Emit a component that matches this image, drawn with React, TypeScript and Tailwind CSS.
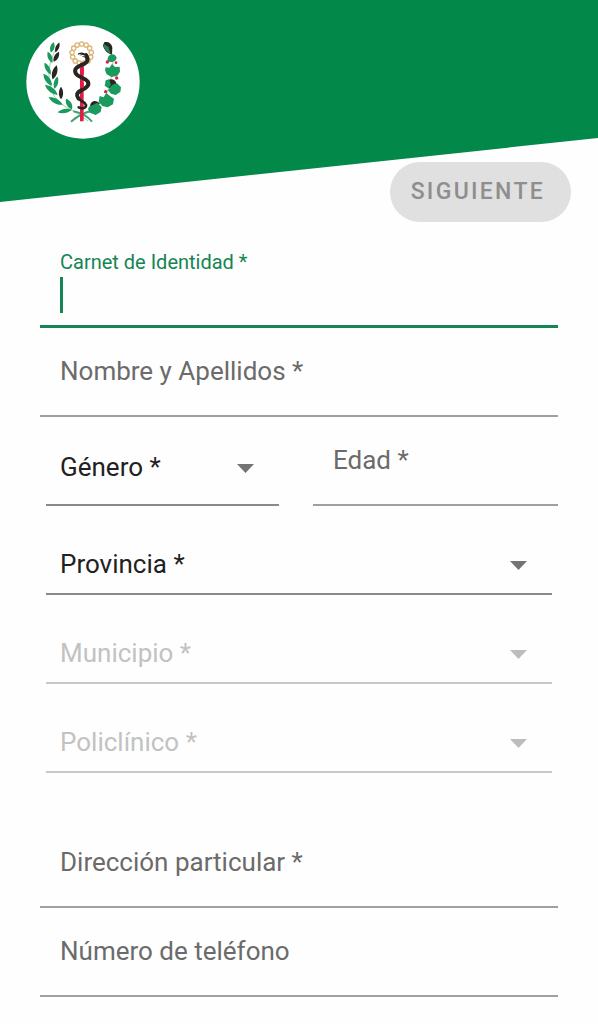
import { useState } from "react";

function Leaf({ x, y, r, l = 15, w = 6, dark = false }: { x: number; y: number; r: number; l?: number; w?: number; dark?: boolean }) {
  return (
    <path
      d={`M0 ${-l}C${w * 1.2} ${-l / 2} ${w * 1.6} ${l / 3} 0 ${l}C${-w * 1.6} ${l / 3} ${-w * 1.2} ${-l / 2} 0 ${-l}Z`}
      transform={`translate(${x} ${y}) rotate(${r})`}
      fill={dark ? "#2b2422" : "#1a9a5c"}
    />
  );
}

function Emblem() {
  const beads = Array.from({ length: 13 }, (_, i) => {
    const a = (i / 13) * Math.PI * 2 + Math.PI / 2 + 0.24;
    return [185 + 29 * Math.cos(a), 101 + 29 * Math.sin(a)];
  });
  return (
    <svg viewBox="18 15 342 342" className="size-[114px]" role="img" aria-label="Salud Pública">
      <circle cx="189" cy="186" r="170" fill="#fff" />
      <g fill="none" stroke="#dcb677" strokeWidth="4">
        {beads.map(([x, y], i) => (
          <circle key={i} cx={x} cy={y} r="6.5" />
        ))}
      </g>
      <path d="M107 90C82 130 80 190 104 230C124 262 162 268 204 303" fill="none" stroke="#65b78e" strokeWidth="2" />
      <Leaf x={97} y={82} r={15} l={16} />
      <Leaf x={112} y={82} r={22} l={16} w={5} dark />
      <Leaf x={90} y={112} r={-22} l={18} />
      <Leaf x={109} y={110} r={28} l={17} w={6} dark />
      <Leaf x={83} y={146} r={-28} l={20} />
      <Leaf x={104} y={157} r={16} l={22} w={7} dark />
      <Leaf x={83} y={179} r={-35} l={22} w={7} />
      <Leaf x={108} y={188} r={14} l={19} />
      <Leaf x={94} y={210} r={-52} l={24} w={7} />
      <Leaf x={123} y={219} r={0} l={19} w={6} dark />
      <Leaf x={107} y={243} r={-62} l={24} w={7} />
      <Leaf x={147} y={252} r={-30} l={18} w={7} />
      <Leaf x={134} y={273} r={-100} l={22} />
      <path d="M153 305C175 286 195 276 216 273" fill="none" stroke="#3fa271" strokeWidth="6" />
      <path d="M160 274C184 278 202 289 216 305" fill="none" stroke="#3fa271" strokeWidth="6" />
      <path d="M180 128H191V304H180Z" fill="#e21c46" />
      <g fill="none" stroke="#2b2422" strokeLinecap="round">
        <path d="M198 105C208 121 201 128 188 134C171 141 163 145 166 157C169 171 194 172 203 184C211 197 196 205 184 211C170 217 168 226 175 235" strokeWidth="12" />
        <path d="M175 235C181 244 195 245 198 255C199 264 188 268 176 262" strokeWidth="8" />
      </g>
      <path d="M173 103C177 95 194 94 203 109L204 118L192 112C187 108 180 107 173 103Z" fill="#2b2422" />
      <path d="M177 104L194 108" stroke="#fff" strokeWidth="3" />
      <path d="M186 142V163M186 188V203" stroke="#e21c46" strokeWidth="11" />
      <path d="M271 90C281 112 279 132 276 148C272 186 270 219 227 263" fill="none" stroke="#65b78e" strokeWidth="2" />
      <path d="M253 67C263 64 275 70 277 83L276 104C264 102 252 92 249 76Z" fill="#2b2422" />
      <path d="M251 72L265 80L272 101C258 95 250 84 251 72Z" fill="#238858" />
      <path d="M264 111C272 98 288 102 290 114C288 126 271 130 262 122Z" fill="#1a9a5c" />
      <path d="M257 142L268 143L276 132L285 141L299 140L300 155L292 167L275 171L260 163L255 151Z" fill="#1a9a5c" />
      <path d="M260 184C268 174 286 176 289 190C289 205 269 210 262 199L257 193Z" fill="#2b2422" />
      <path d="M257 181L268 178L273 196L264 204L254 197Z" fill="#1a9a5c" />
      <path d="M269 203L279 193L291 190L303 202L301 216L287 225L273 221L264 211Z" fill="#1a9a5c" />
      <path d="M239 228L251 232L259 219L270 228L282 236L279 253L263 262L247 258L236 245Z" fill="#1a9a5c" />
      <path d="M210 258C212 241 230 239 239 251L229 263Z" fill="#2b2422" />
      <path d="M207 260L220 254L232 248L245 261L242 276L227 285L210 278L204 268Z" fill="#1a9a5c" />
      <g fill="#e21c46">
        <circle cx="262" cy="126" r="5" />
        <circle cx="288" cy="128" r="4" />
        <circle cx="290" cy="174" r="5" />
        <circle cx="257" cy="215" r="5" />
      </g>
    </svg>
  );
}

function TextField({ id, label, type = "text" }: { id: string; label: string; type?: string }) {
  const [value, setValue] = useState("");
  return (
    <div className="grid h-[89px] border-b-2 border-[#a0a0a0]">
      <label
        htmlFor={id}
        className={
          value
            ? "pointer-events-none col-start-1 row-start-1 pt-2 pl-5 text-[20px] leading-[30px]"
            : "pointer-events-none col-start-1 row-start-1 pt-7 pl-5 text-[26px] leading-[30px]"
        }
      >
        {label}
      </label>
      <input
        id={id}
        type={type}
        value={value}
        onChange={(e) => setValue(e.target.value)}
        className="col-start-1 row-start-1 w-full min-w-0 bg-transparent px-5 pt-9 text-[26px] text-[#212121] outline-none"
      />
    </div>
  );
}

function ActiveField({ id, label }: { id: string; label: string }) {
  const [value, setValue] = useState("");
  return (
    <div className="flex h-[89px] flex-col border-b-[3px] border-[#158553] px-5 pt-2">
      <label htmlFor={id} className="text-[20px] leading-[30px] text-[#158553]">
        {label}
      </label>
      <div className="flex h-9 items-center">
        {value === "" && <span className="h-9 w-[3px] shrink-0 bg-[#158553]" />}
        <input
          id={id}
          inputMode="numeric"
          value={value}
          onChange={(e) => setValue(e.target.value)}
          className="h-9 w-full min-w-0 bg-transparent text-[26px] text-[#212121] caret-transparent outline-none"
        />
      </div>
    </div>
  );
}

function SelectField({ id, label, disabled = false, tall = false }: { id: string; label: string; disabled?: boolean; tall?: boolean }) {
  return (
    <div className="mx-1.5 flex h-[89px] items-end">
      <div className={tall ? "grid h-[76px] w-full" : "grid h-[60px] w-full"}>
        <select
          id={id}
          aria-label={label}
          disabled={disabled}
          className={
            disabled
              ? "col-start-1 row-start-1 w-full appearance-none border-b-2 border-[#c8c8c8] bg-transparent pl-3.5 text-[26px] text-[#c2c2c2] opacity-100 outline-none"
              : "col-start-1 row-start-1 w-full appearance-none border-b-2 border-[#8a8a8a] bg-transparent pl-3.5 text-[26px] text-[#212121] outline-none"
          }
        >
          <option>{label}</option>
        </select>
        <svg
          viewBox="0 0 17 9"
          className={
            disabled
              ? "pointer-events-none col-start-1 row-start-1 mr-[25px] h-[9px] w-[17px] self-center justify-self-end fill-[#bdbdbd]"
              : "pointer-events-none col-start-1 row-start-1 mr-[25px] h-[9px] w-[17px] self-center justify-self-end fill-[#737373]"
          }
          aria-hidden="true"
        >
          <path d="M0 0H17L8.500 9Z" />
        </svg>
      </div>
    </div>
  );
}

export default function App() {
  return (
    <div className="min-h-screen bg-[#fefefe] font-[Roboto,sans-serif] text-[#6b6b6b]">
      <header className="h-[202px] bg-[#02894a] pt-[25px] pl-[26px] [clip-path:polygon(0_0,100%_0,100%_68.3%,0_100%)]">
        <Emblem />
      </header>
      <form>
        <div className="relative -mt-10 flex justify-end pr-[27px]">
          <button
            type="submit"
            disabled
            className="h-[60px] rounded-full bg-[#e0e0e0] pr-[26px] pl-[21px] text-[23px] font-medium tracking-widest text-[#8e8e8e]"
          >
            SIGUIENTE
          </button>
        </div>
        <div className="px-10 pt-[17px] pb-6">
          <ActiveField id="carnet" label="Carnet de Identidad *" />
          <TextField id="nombre" label="Nombre y Apellidos *" />
          <div className="grid grid-cols-2 gap-7">
            <SelectField id="genero" label="Género *" tall />
            <TextField id="edad" label="Edad *" />
          </div>
          <SelectField id="provincia" label="Provincia *" />
          <SelectField id="municipio" label="Municipio *" disabled />
          <SelectField id="policlinico" label="Policlínico *" disabled />
          <div className="pt-[46px]">
            <TextField id="direccion" label="Dirección particular *" />
            <TextField id="telefono" label="Número de teléfono" type="tel" />
          </div>
        </div>
      </form>
    </div>
  );
}
